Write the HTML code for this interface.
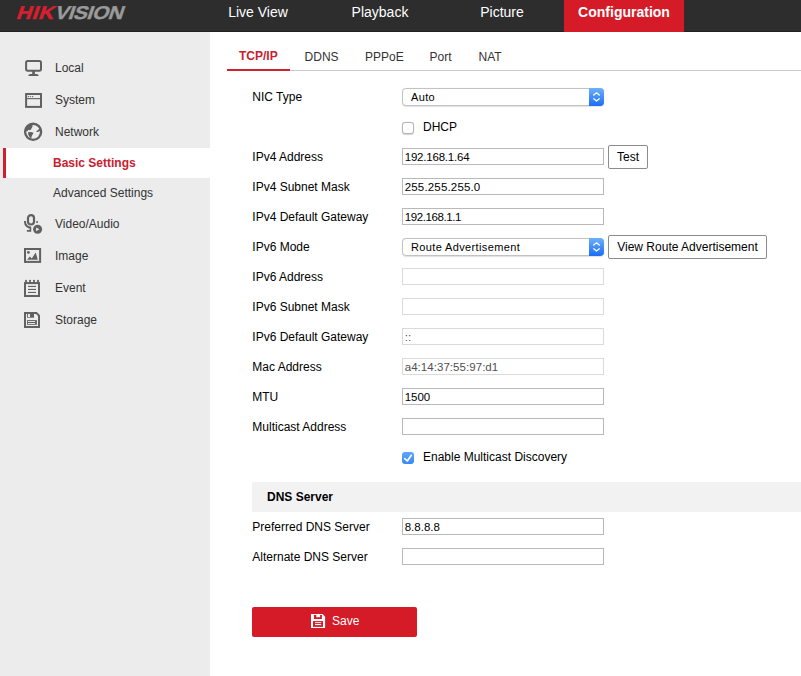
<!DOCTYPE html>
<html><head><meta charset="utf-8">
<style>
*{box-sizing:border-box;margin:0;padding:0}
html,body{width:801px;height:676px;overflow:hidden;background:#fff;font-family:"Liberation Sans",sans-serif;font-size:12px;color:#000}
#hdr{position:absolute;left:0;top:0;width:801px;height:32px;background:#2d2d2d;border-bottom:1px solid #212121}
#logo{position:absolute;left:14px;top:3px;-webkit-text-stroke:0.35px;font-size:18.5px;font-weight:bold;letter-spacing:-0.4px;color:#9a9a9a;line-height:20px;transform-origin:0 100%;transform:skewX(-19deg) scaleX(1.13);white-space:nowrap}
#logo b{color:#d7202f;letter-spacing:0.7px;-webkit-text-stroke:0.5px #d7202f}
.nav{position:absolute;top:0;height:32px;line-height:24px;font-size:14px;color:#fff;text-align:center}
#side{position:absolute;left:0;top:32px;width:210px;height:644px;background:#ececec}
.mi{position:absolute;left:55px;font-size:12px;color:#333;line-height:14px}
.ic{position:absolute}
#sel{position:absolute;left:3px;top:116px;width:207px;height:30px;background:#fff;border-left:3px solid #d0202f}
.tab{position:absolute;top:50px;font-size:12px;color:#333;line-height:14px}
.lbl{position:absolute;left:252.3px;font-size:12px;line-height:14px;color:#000}
.inp{position:absolute;left:402px;width:202px;height:17px;border:1px solid #b9b9b9;background:#fff;font-size:11.5px;line-height:17px;padding-left:1.7px;color:#000;white-space:nowrap}
.inp.dis{border-color:#dadada;color:#4f4f4f}
.sel{position:absolute;left:402px;width:202px;height:18px;border:1px solid #c2c2c2;border-radius:4px;background:#fff;font-size:11px;letter-spacing:0.37px;line-height:16px;padding-left:8px;box-shadow:0 0.5px 1px rgba(0,0,0,0.12)}
.sel i{position:absolute;right:-1px;top:-1px;width:15px;height:18px;border-radius:0 4px 4px 0;background:linear-gradient(#6db1f9,#1b6df5)}
.sel svg{position:absolute;left:0;top:0}
.btn{position:absolute;height:24px;border:1px solid #8c8c8c;border-radius:2px;background:#fff;font-size:12px;line-height:22.6px;text-align:center}
.cb{position:absolute;left:402px;width:12px;height:12px;border:1px solid #b2b2b2;border-radius:3px;background:#fff;box-shadow:0 0.5px 1px rgba(0,0,0,0.18)}
</style></head><body>
<div id="hdr">
 <div id="logo"><b>HIK</b>VISION</div>
 <div class="nav" style="left:210px;width:96px">Live View</div>
 <div class="nav" style="left:330px;width:100px">Playback</div>
 <div class="nav" style="left:460px;width:84px">Picture</div>
 <div class="nav" style="left:564px;width:120px;background:#d41b27;font-weight:bold">Configuration</div>
</div>
<div id="side">
 <div id="sel"></div>
</div>


<svg class="ic" style="left:18px;top:53px" width="30" height="30" viewBox="0 0 30 30"><rect x="8.1" y="8.1" width="14.9" height="9.6" rx="1.6" fill="none" stroke="#616161" stroke-width="2"/><rect x="14.2" y="18" width="2.7" height="3.5" fill="#616161"/><path d="M10 22.9 L11.6 21.1 H19.3 L20.9 22.9 Z" fill="#616161"/></svg>
<svg class="ic" style="left:18px;top:85px" width="30" height="30" viewBox="0 0 30 30"><rect x="8.1" y="9" width="14.9" height="12.9" fill="none" stroke="#616161" stroke-width="2"/><rect x="8" y="13.1" width="15" height="1.1" fill="#616161"/><circle cx="10.4" cy="11.6" r="0.7" fill="#616161"/><circle cx="12.5" cy="11.6" r="0.7" fill="#616161"/><circle cx="14.6" cy="11.6" r="0.7" fill="#616161"/></svg>
<svg class="ic" style="left:18px;top:116px" width="30" height="30" viewBox="0 0 30 30"><circle cx="15.1" cy="15.8" r="8.05" fill="none" stroke="#616161" stroke-width="2.3"/><path d="M7.4 15.5 L7.4 12.5 L9.5 9.3 L13 8.2 L14.4 8.6 L14.6 10.6 L13.6 12.2 L12.8 13.8 L11.6 14.2 L10.2 13.8 L9.8 15 Z" fill="#616161"/><path d="M10 16.2 L13 16 L15.6 16.7 L14.6 18.6 L13.6 20.4 L13.3 22.4 L11.8 21.4 L10.2 18.6 Z" fill="#616161"/><path d="M18 15.2 L20 13.9 L21.6 12.6 L22.6 14 L21.4 15.6 L19.2 16 Z" fill="#616161"/></svg>
<svg class="ic" style="left:18px;top:208px" width="30" height="30" viewBox="0 0 30 30"><rect x="10" y="7.1" width="6" height="9.4" rx="3" fill="none" stroke="#616161" stroke-width="2.2"/><path d="M7 13.1 V14 A6 5.6 0 0 0 13 19.6" fill="none" stroke="#616161" stroke-width="2"/><path d="M12.4 19 V22.8 H8.9" fill="none" stroke="#616161" stroke-width="1.7"/><rect x="18.2" y="13.2" width="1.8" height="1.7" fill="#616161"/><circle cx="19.6" cy="21.3" r="5.2" fill="#ececec"/><circle cx="19.6" cy="21.3" r="4.5" fill="#616161"/><path d="M18.1 19.4 L21.4 21.3 L18.1 23.2 Z" fill="#ececec"/></svg>
<svg class="ic" style="left:18px;top:240px" width="30" height="30" viewBox="0 0 30 30"><rect x="7" y="9" width="15.1" height="12.9" fill="none" stroke="#616161" stroke-width="2"/><circle cx="10.4" cy="12.4" r="1.4" fill="#616161"/><path d="M9.1 19.7 L11.8 16.4 L13.8 18.4 L17.7 12.5 L19.8 19.7 Z" fill="#616161"/></svg>
<svg class="ic" style="left:18px;top:273px" width="30" height="30" viewBox="0 0 30 30"><rect x="7" y="10.1" width="14" height="12.9" fill="none" stroke="#616161" stroke-width="2"/><rect x="7.1" y="6.9" width="1.8" height="3" fill="#616161"/><rect x="11.1" y="6.9" width="1.8" height="3" fill="#616161"/><rect x="15.1" y="6.9" width="1.8" height="3" fill="#616161"/><rect x="19.1" y="6.9" width="1.8" height="3" fill="#616161"/><rect x="10" y="12.9" width="8" height="1.1" fill="#616161"/><rect x="10" y="15.9" width="8" height="1.1" fill="#616161"/><rect x="10" y="18.9" width="8" height="1.1" fill="#616161"/></svg>
<svg class="ic" style="left:18px;top:305px" width="30" height="30" viewBox="0 0 30 30"><path d="M7 7.9 H18.4 L21 10.6 V21.9 H7 Z" fill="none" stroke="#616161" stroke-width="2"/><rect x="9.1" y="8" width="6.9" height="4.7" fill="#616161"/><rect x="10" y="9" width="2" height="3" fill="#ececec"/><rect x="9.1" y="15.1" width="9.8" height="4.7" fill="#616161"/><rect x="10" y="16.1" width="7.1" height="0.9" fill="#ececec"/><rect x="10" y="18" width="7.1" height="0.9" fill="#ececec"/></svg>
<div class="mi" style="top:61px">Local</div>
<div class="mi" style="top:93px">System</div>
<div class="mi" style="top:125px">Network</div>
<div class="mi" style="top:156px;left:53px;font-weight:bold;color:#c8202f">Basic Settings</div>
<div class="mi" style="top:186px;left:53px">Advanced Settings</div>
<div class="mi" style="top:217px">Video/Audio</div>
<div class="mi" style="top:249px">Image</div>
<div class="mi" style="top:281px">Event</div>
<div class="mi" style="top:313px">Storage</div>

<div class="tab" style="left:239px;font-weight:bold;color:#c8202f;top:49px">TCP/IP</div>
<div class="tab" style="left:304.6px">DDNS</div>
<div class="tab" style="left:365px">PPPoE</div>
<div class="tab" style="left:429.6px">Port</div>
<div class="tab" style="left:478.6px">NAT</div>
<div style="position:absolute;left:227px;top:70px;width:574px;height:1px;background:#ccc"></div>
<div style="position:absolute;left:227px;top:69px;width:63px;height:2px;background:#d0202f"></div>

<div class="lbl" style="top:90px">NIC Type</div>
<div class="sel" style="top:88px">Auto<i><svg width="15" height="18" viewBox="0 0 15 18"><path d="M4.7 7.1 L7.5 4.8 L10.3 7.1 M4.7 10.8 L7.5 13.1 L10.3 10.8" fill="none" stroke="#fff" stroke-width="1.3" stroke-linecap="round" stroke-linejoin="round"/></svg></i></div>
<div class="cb" style="top:122px"></div>
<div class="lbl" style="left:423px;top:120px">DHCP</div>
<div class="lbl" style="top:150px">IPv4 Address</div>
<div class="inp" style="top:148px;letter-spacing:-0.20px">192.168.1.64</div>
<div class="btn" style="left:608px;top:145px;width:40px">Test</div>
<div class="lbl" style="top:180px">IPv4 Subnet Mask</div>
<div class="inp" style="top:178px;letter-spacing:0.17px">255.255.255.0</div>
<div class="lbl" style="top:210px">IPv4 Default Gateway</div>
<div class="inp" style="top:208px;letter-spacing:-0.41px">192.168.1.1</div>
<div class="lbl" style="top:240px">IPv6 Mode</div>
<div class="sel" style="top:238px">Route Advertisement<i><svg width="15" height="18" viewBox="0 0 15 18"><path d="M4.7 7.1 L7.5 4.8 L10.3 7.1 M4.7 10.8 L7.5 13.1 L10.3 10.8" fill="none" stroke="#fff" stroke-width="1.3" stroke-linecap="round" stroke-linejoin="round"/></svg></i></div>
<div class="btn" style="left:608px;top:235px;width:159px">View Route Advertisement</div>
<div class="lbl" style="top:270px">IPv6 Address</div>
<div class="inp dis" style="top:268px"></div>
<div class="lbl" style="top:300px">IPv6 Subnet Mask</div>
<div class="inp dis" style="top:298px"></div>
<div class="lbl" style="top:330px">IPv6 Default Gateway</div>
<div class="inp dis" style="top:328px">::</div>
<div class="lbl" style="top:360px">Mac Address</div>
<div class="inp dis" style="top:358px;letter-spacing:0.05px">a4:14:37:55:97:d1</div>
<div class="lbl" style="top:390px">MTU</div>
<div class="inp" style="top:388px;letter-spacing:0.00px">1500</div>
<div class="lbl" style="top:420px">Multicast Address</div>
<div class="inp" style="top:418px"></div>
<div class="cb" style="top:452px;border:none;box-shadow:none;background:linear-gradient(#5ca7f9,#3a88f6)"><svg width="12" height="12" viewBox="0 0 12 12" style="position:absolute;left:0;top:0"><path d="M2.7 6.6 L5.3 9 L9.3 3.3" fill="none" stroke="#fff" stroke-width="1.7" stroke-linecap="round" stroke-linejoin="round"/></svg></div>
<div class="lbl" style="left:423px;top:450px">Enable Multicast Discovery</div>

<div style="position:absolute;left:252px;top:482px;width:549px;height:30px;background:#f2f2f2"></div>
<div class="lbl" style="left:267px;top:490px;font-weight:bold">DNS Server</div>
<div class="lbl" style="top:520px">Preferred DNS Server</div>
<div class="inp" style="top:518px;letter-spacing:0.02px">8.8.8.8</div>
<div class="lbl" style="top:550px">Alternate DNS Server</div>
<div class="inp" style="top:548px"></div>
<div style="position:absolute;left:252px;top:607px;width:165px;height:30px;background:#d41b27;border-radius:2px"></div>
<svg style="position:absolute;left:303px;top:606px" width="30" height="30" viewBox="0 0 30 30"><path d="M8 8 H19.6 L22.1 10.7 V22.1 H8 Z" fill="#fff"/><path d="M10.9 9.1 H13.3 V11.3 H17.1 V9.1 H18.9 V12.9 H10.9 Z" fill="#d41b27"/><rect x="10" y="15.1" width="10" height="5.8" fill="#d41b27"/><rect x="12" y="16.2" width="6.2" height="0.9" fill="#fff"/><rect x="12" y="18" width="6.2" height="1.1" fill="#fff"/></svg>
<div class="lbl" style="left:332px;top:614px;color:#fff">Save</div>
</body></html>
